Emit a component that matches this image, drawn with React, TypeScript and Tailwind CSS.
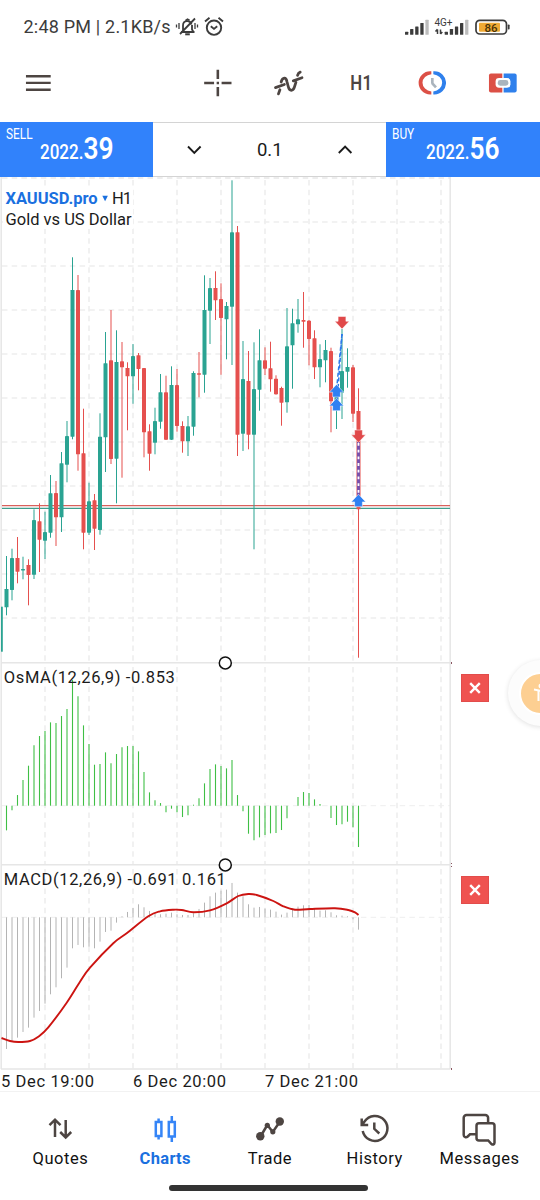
import type { ReactNode } from "react";

const UP = "#2aa392";
const DOWN = "#e5504e";
const INK = "#4d4542";

// [direction, high, body top, body bottom, low]
type Candle = [1 | -1, number, number, number, number];

const candles: Candle[] = [
  [1, 556, 589, 607.3, 615.3],
  [1, 548.7, 558, 590, 600.3],
  [-1, 537, 558, 571.7, 583.3],
  [1, 556.7, 569, 570.5, 579.3],
  [-1, 559.3, 565, 575, 605.3],
  [1, 509.3, 520, 574.7, 579],
  [-1, 503.3, 521.3, 539.7, 572],
  [1, 511.7, 532, 540.7, 559],
  [1, 475, 493.3, 532.7, 537.7],
  [-1, 481, 493, 517.3, 546],
  [1, 452, 463.3, 517.3, 532],
  [1, 421, 436, 464.7, 482.3],
  [1, 257.3, 290, 436.7, 439.3],
  [-1, 275, 290, 454.3, 470.7],
  [-1, 408.7, 453.3, 532.7, 549.3],
  [1, 482.7, 501.3, 532.7, 535],
  [-1, 494, 500.3, 528.7, 550],
  [1, 413.3, 436.7, 530, 534.7],
  [1, 332, 363.3, 437.3, 472],
  [-1, 310, 360.3, 459, 464],
  [1, 330.3, 362, 458.7, 503.3],
  [-1, 342, 361.3, 367.3, 477.7],
  [-1, 362.3, 368, 376.3, 430.3],
  [1, 344, 356, 376.3, 403.7],
  [-1, 353, 355.3, 369, 390.3],
  [-1, 368, 368, 432.3, 457.3],
  [-1, 424.3, 431.3, 453.7, 470.7],
  [1, 407.7, 421, 442.7, 454.3],
  [1, 374, 392.3, 421.7, 428.7],
  [-1, 375.7, 392.3, 439.7, 440],
  [1, 366.3, 385, 439.7, 440],
  [-1, 369, 385, 426, 431.7],
  [-1, 421.3, 426, 441.3, 452.7],
  [1, 416, 426.3, 441.3, 456],
  [1, 371.3, 373, 426.7, 435.7],
  [-1, 352, 373.3, 374.7, 397.3],
  [1, 275.3, 310, 374.7, 392.7],
  [1, 278, 288, 310.7, 344],
  [-1, 271.3, 288, 300.3, 320],
  [-1, 283.3, 299, 318, 374.7],
  [1, 302, 306, 319.3, 359.3],
  [1, 180.3, 232.3, 306.7, 365],
  [-1, 226, 232.3, 434.7, 456],
  [1, 341, 379, 433.7, 451],
  [-1, 351, 381, 434.7, 449.3],
  [1, 342.3, 389, 434.7, 549.3],
  [1, 329.3, 360.3, 389.7, 410.7],
  [-1, 347.3, 360.3, 368.7, 375],
  [-1, 341.7, 368.3, 379.3, 391.7],
  [-1, 375.3, 378.7, 394.3, 394.7],
  [-1, 386.7, 388, 402.7, 425.7],
  [1, 308, 346.3, 402.3, 412.7],
  [1, 308.7, 323.3, 345.3, 388.7],
  [1, 299, 319.3, 324.3, 332.7],
  [-1, 292, 320, 321.7, 347.7],
  [-1, 320, 320.7, 339, 365.3],
  [-1, 330.3, 338.3, 367.3, 379],
  [1, 344.3, 359, 367.3, 387.3],
  [1, 340, 350, 360.3, 382.3],
  [-1, 347.7, 351, 401.3, 432.3],
  [1, 388, 392, 402, 429],
  [1, 329, 371, 392.7, 419],
  [1, 348.3, 367, 371.7, 387.7],
  [-1, 365, 367.3, 413.7, 422],
  [-1, 388.3, 411, 509.3, 657.7],
];

// histogram values, in thirds of a pixel from the zero line
const osma = [
  -74, -14, 32, 77, 120, 181, 209, 224, 250, 248, 269, 290, 377, 328, 241, 185, 123, 125, 160, 127, 155, 175,
  179, 179, 163, 101, 40, 16, 8, -20, -9, -20, -34, -29, 3, 22, 67, 110, 124, 119, 112, 137, 32, -17, -84, -104,
  -95, -88, -83, -82, -73, -38, 0, 26, 41, 38, 19, 5, 0, -37, -58, -56, -48, -65, -124,
];

const macd = [
  -395, -373, -361, -344, -331, -301, -281, -259, -231, -210, -183, -151, -93, -83, -90, -88, -93, -73, -44,
  -40, -16, 3, 16, 28, 39, 30, 19, 12, 9, 11, 14, 9, 7, 7, 12, 25, 44, 63, 74, 80, 83, 103, 74, 63, 39, 29, 31,
  26, 23, 17, 8, 14, 26, 32, 36, 37, 28, 20, 21, 15, 6, 5, 3, -6, -37,
];

const signal: [number, number][] = [
  [1.5, 1038], [10, 1041], [18.3, 1042], [30, 1041], [38.3, 1036.7], [48.3, 1027.3], [66.7, 1002.7],
  [80, 981.7], [90, 967.7], [113.3, 943.3], [126.7, 933.3], [148.3, 916.3], [160, 911.3], [173.3, 909.7],
  [181.7, 910], [193.3, 912.3], [210, 910.3], [226.7, 903.3], [238.3, 896], [248.3, 894], [256.7, 895],
  [273.3, 901], [283.3, 906.3], [295, 909.7], [310, 909], [335, 908.3], [348.3, 910], [355, 912.3], [358.5, 915],
];

const gridX = [45, 89, 133, 177, 221, 265, 309, 353, 397, 441];
const gridY = [222, 266, 310, 354, 398, 442, 486, 530, 574, 618];

const barX = (i: number) => 6.5 + 5.5 * i;

function smooth(points: [number, number][]) {
  let d = `M${points[0][0]} ${points[0][1]}`;
  for (let i = 0; i < points.length - 1; i++) {
    const p0 = points[Math.max(i - 1, 0)];
    const p1 = points[i];
    const p2 = points[i + 1];
    const p3 = points[Math.min(i + 2, points.length - 1)];
    d += `C${p1[0] + (p2[0] - p0[0]) / 6} ${p1[1] + (p2[1] - p0[1]) / 6} ${p2[0] - (p3[0] - p1[0]) / 6} ${
      p2[1] - (p3[1] - p1[1]) / 6
    } ${p2[0]} ${p2[1]}`;
  }
  return d;
}

export default function App() {
  return (
    <div className="relative flex h-[1200px] w-[540px] flex-col overflow-hidden bg-white font-[Roboto,sans-serif] text-[#1b1b1b]">
      <StatusBar />
      <Toolbar />
      <TradeBar />
      <main className="flex h-[914px] shrink-0">
        <Chart />
        <aside className="flex flex-col pl-[9px] pt-[497px]">
          <CloseButton />
          <div className="h-[174.5px]" />
          <CloseButton />
        </aside>
      </main>
      <BottomNav />
      <FloatingBubble />
    </div>
  );
}

function StatusBar() {
  return (
    <header className="flex h-[53px] shrink-0 items-center pl-[23.5px] pr-[30px] text-[#3c3c3c]">
      <span className="whitespace-nowrap text-[18px] tracking-[0.2px]">2:48 PM | 2.1KB/s</span>
      <svg className="ml-1 shrink-0" width="24" height="22" viewBox="0 0 24 22" fill="none" stroke="#3c3c3c" strokeWidth="1.8">
        <path d="M6 16h13.5M8 14.5V9.5a4.3 4.3 0 0 1 8.5-1M17 9v4.5l1.500 2.500M20 2.500 5 18" />
        <path d="M10.500 4.800 12.500 3.300l2 1" />
        <path d="M10.200 18.300h4.600" strokeWidth="2" />
        <path d="M1.500 8.500v3M4 7v6M22.500 8.500v3M20 7v6" strokeWidth="1.300" />
      </svg>
      <svg className="ml-[5px] shrink-0" width="20" height="22" viewBox="0 0 20 22" fill="none" stroke="#3c3c3c" strokeWidth="1.900">
        <circle cx="10" cy="11.700" r="7.200" />
        <path d="M1 5.500 5.500 1.800M19 5.500l-4.500-3.700" />
        <path d="m6.800 10.300 3.200 2.600 3.200-2.600" />
      </svg>
      <svg className="ml-auto shrink-0" width="106" height="22" viewBox="404 15 106 22">
        <Signal x={405} />
        <text x="434.500" y="25" fontSize="10" textLength="18" fill="#3c3c3c">
          4G+
        </text>
        <path d="M437.500 33v-4.500M435.500 30.500l2-2.200M440.500 28.500v4.500M442.300 31l-1.800 2" stroke="#3c3c3c" strokeWidth="1.500" />
        <Signal x={444.7} />
        <rect x="476" y="19.300" width="30.500" height="13.700" rx="3.800" fill="#fff" stroke="#3c3c3c" strokeWidth="1.700" />
        <rect x="479" y="21.800" width="21" height="9" rx="1" fill="#efaa35" />
        <rect x="507.800" y="23.500" width="1.800" height="5" rx="0.800" fill="#3c3c3c" />
        <text x="484.500" y="30.500" fontSize="11.500" fontWeight="500" textLength="13" fill="#4a3207">
          86
        </text>
      </svg>
    </header>
  );
}

function Signal({ x }: { x: number }) {
  return (
    <g>
      {[3, 5.7, 8.3, 11.7, 15].map((h, i) => (
        <rect key={h} x={x + i * 5.1} y={33.8 - h} width="3.300" height={h} rx="0.500" fill={i === 4 ? "#bdbdbd" : "#3c3c3c"} />
      ))}
    </g>
  );
}

function Toolbar() {
  return (
    <div className="flex h-[69px] shrink-0 items-center px-[22px] pb-[9px]">
      <svg width="32" height="32" viewBox="22 67.500 32 32" stroke={INK} strokeWidth="2.400">
        <path d="M26 76.700h25M26 83.400h25M26 90.300h25" />
      </svg>
      <svg className="ml-[148px]" width="32" height="32" viewBox="202 67.500 32 32" fill="none" stroke={INK} strokeWidth="2.600">
        <path d="M204.200 83.500h10M221.800 83.500h10M218 70v9.500M218 87.500V97M216.800 83.500h2.400" />
      </svg>
      <svg className="ml-[40px]" width="32" height="32" viewBox="273 67.500 32 32" fill="none" stroke={INK} strokeWidth="2.800" strokeLinecap="round">
        <path d="M275.500 88.200 284.500 85M293.500 81.300l8.800-3.100" />
        <path d="M278.500 94.500 280 90.300M281.200 82.500c1.500-4.800 5-5.500 6 0l1.200 4.500c1.200 5.300 5 4.800 6.300.5l1.500-4.800M297.800 75.800c.5-1.800 1.200-2.800 2.700-3.300" />
      </svg>
      <div className="ml-[40px] flex w-[32px] justify-center">
        <span className="inline-block scale-x-[0.84] text-[20px] font-semibold leading-8 tracking-[0.5px] text-[#4d4542]">
          H1
        </span>
      </div>
      <svg className="ml-[38px]" width="32" height="32" viewBox="415 67.500 32 32" fill="none">
        <path d="M431.500 71.700h-1.200a11.650 11.650 0 0 0 0 23.300h1.200v-3a10 8.700 0 0 1 0-17.300z" fill="#dc5046" />
        <path d="M433.500 71.700h1.200a11.650 11.650 0 0 1 0 23.300h-1.200v-3a10 8.700 0 0 0 0-17.300z" fill="#2f80ec" />
        <path d="M432.500 78.500v4.500q0 1 .7 1.700l3 3.300" stroke="#aab4bd" strokeWidth="2.700" />
      </svg>
      <svg className="ml-[40px]" width="32" height="32" viewBox="487 67.500 32 32">
        <path d="M503.500 74h-11.500a2 2 0 0 0-2 2v15a2 2 0 0 0 2 2h11.500z" fill="#dc5046" />
        <path d="M504.800 74H516a2 2 0 0 1 2 2v15a2 2 0 0 1-2 2h-11.200z" fill="#2f80ec" />
        <rect x="496.700" y="78.500" width="15" height="9.800" rx="3.500" fill="#fff" />
        <rect x="498.900" y="80.500" width="10.700" height="5.800" rx="2.500" fill="#aab4bd" />
      </svg>
    </div>
  );
}

function TradeBar() {
  return (
    <div className="flex h-[55px] shrink-0">
      <PriceButton side="SELL" whole="2022." pips="39" className="w-[153.300px] pl-[39.500px]" />
      <div className="flex flex-1 items-center border-y border-[#d4d4d4] pl-[32px] pr-[32px]">
        <svg width="18" height="18" viewBox="0 0 18 18" fill="none" stroke="#1b1b1b" strokeWidth="1.900">
          <path d="m3 5.500 6.300 6.300 6.300-6.300" />
        </svg>
        <span className="flex-1 pt-px text-center text-[18.500px] leading-none">0.1</span>
        <svg width="18" height="18" viewBox="0 0 18 18" fill="none" stroke="#1b1b1b" strokeWidth="1.900">
          <path d="m2.800 12 6.300-6.300 6.300 6.300" />
        </svg>
      </div>
      <PriceButton side="BUY" whole="2022." pips="56" className="w-[153.700px] pl-[39.500px]" />
    </div>
  );
}

function PriceButton({ side, whole, pips, className }: { side: string; whole: string; pips: string; className: string }) {
  return (
    <button className={`relative flex items-start bg-[#3182fb] text-left text-white ${className}`}>
      <span className="absolute left-[5.500px] top-[5px] origin-left scale-x-[0.82] text-[14.500px] leading-4">{side}</span>
      <span className="origin-left scale-x-[0.85] whitespace-nowrap pt-[9px] text-[20px] font-medium leading-9">
        {whole}
        <span className="text-[31px] font-semibold">{pips}</span>
      </span>
    </button>
  );
}

function Chart() {
  return (
    <svg className="shrink-0" width="452" height="914" viewBox="0 177 452 914">
      <g stroke="#eeeeee" strokeWidth="1.600" strokeDasharray="5.500 4.200" fill="none">
        {gridX.map((x) => (
          <path key={x} d={`M${x} 180V662M${x} 667V864M${x} 869V1069`} />
        ))}
        {gridY.map((y) => (
          <path key={y} d={`M2 ${y}H450`} />
        ))}
        <path d="M2 805.700H450M2 917.300H450" strokeWidth="1" />
      </g>
      <path d="M2 178H450" stroke="#dcdcdc" strokeDasharray="5.500 4.200" />
      <g stroke="#e6e6e6" strokeWidth="1.500">
        <path d="M1.200 177V1069M450.200 177V1069M1 662.700H450M1 864.700H450M1 1069H450" />
      </g>
      <path d="M451.500 662v2M451.500 863v1M451.500 866v1M451.500 1068v2" stroke="#8a5560" strokeWidth="1" />
      <rect x="3" y="188" width="130" height="41" fill="#fff" />

      <path d="M2 505.600H450" stroke="#d9605c" strokeWidth="1.200" />
      <path d="M2 508.400H450" stroke="#3f9d8c" strokeWidth="1.200" />

      <rect x="1" y="606.700" width="1.800" height="45" fill={UP} />
      {candles.map(([dir, high, top, bottom, low], i) => (
        <g key={i} fill={dir > 0 ? UP : DOWN}>
          <rect x={barX(i) - 0.5} y={high} width="1" height={low - high} />
          <rect x={barX(i) - 2} y={top} width="4" height={bottom - top} rx="0.400" />
        </g>
      ))}

      <g stroke="#2b79ea" strokeWidth="1.500" strokeDasharray="4 2.500" fill="none">
        <path d="M342 334 336.500 390" />
        <path d="M342 334 337 403" strokeDashoffset="2" />
      </g>
      <path d="M358.500 442V495" stroke="#7352b0" strokeWidth="2.800" />
      <path d="M358.500 443V495" stroke="#fff" strokeWidth="1.800" strokeDasharray="2.800 3.900" />
      <OrderArrow x={342} y={328.5} kind="sell" />
      <OrderArrow x={336.5} y={385} kind="buy" />
      <OrderArrow x={336.5} y={398.7} kind="buy" />
      <OrderArrow x={358.5} y={442} kind="sell" />
      <OrderArrow x={358.5} y={494.7} kind="buy" />

      <g stroke="#3fbf45" strokeWidth="1.100">
        {osma.map((v, i) => (
          <line key={i} x1={barX(i)} x2={barX(i)} y1="805.700" y2={805.7 - v / 3} />
        ))}
      </g>
      <g stroke="#b4b4b4">
        {macd.map((v, i) => (
          <line key={i} x1={barX(i)} x2={barX(i)} y1="917.300" y2={917.3 - v / 3} />
        ))}
      </g>
      <path d={smooth(signal)} stroke="#cc1411" strokeWidth="1.900" fill="none" />

      <g fill="#fff" stroke="#111" strokeWidth="1.500">
        <circle cx="225.300" cy="662.900" r="6" />
        <circle cx="225.300" cy="864.900" r="6" />
      </g>

      <g fontSize="16.500" fill="#1b1b1b">
        <text x="5.500" y="203.800" fontWeight="700" fill="#1a70df" textLength="92">
          XAUUSD.pro
        </text>
        <path d="M102.300 195.800h5.600l-2.800 5.400z" fill="#1a70df" />
        <text x="112" y="203.800" textLength="20">
          H1
        </text>
        <text x="5.500" y="224.600" textLength="126">
          Gold vs US Dollar
        </text>
        <text x="3.800" y="683" textLength="171">
          OsMA(12,26,9) -0.853
        </text>
        <text x="3.800" y="885" textLength="222">
          MACD(12,26,9) -0.691 0.161
        </text>
        <text x="1" y="1086.700" textLength="93">
          5 Dec 19:00
        </text>
        <text x="133" y="1086.700" textLength="93">
          6 Dec 20:00
        </text>
        <text x="265" y="1086.700" textLength="93">
          7 Dec 21:00
        </text>
      </g>
    </svg>
  );
}

// y is the tip of the arrow
function OrderArrow({ x, y, kind }: { x: number; y: number; kind: "buy" | "sell" }) {
  return (
    <path
      transform={`translate(${x} ${y}) scale(1 ${kind === "buy" ? 1 : -1})`}
      d="M0-.5 7.200 7.200H3.900v4.800h-7.800V7.200h-3.300z"
      fill={kind === "buy" ? "#2f80f2" : "#e0494a"}
      stroke="#fff"
      strokeWidth="0.500"
    />
  );
}

function CloseButton() {
  return (
    <button className="flex h-[27.500px] w-[27.500px] items-center justify-center border border-[#e24c4b] bg-[#ef5350]">
      <svg width="12" height="12" viewBox="0 0 12 12" stroke="#fff" strokeWidth="2.400">
        <path d="m1.200 1.200 9.600 9.600M10.800 1.200l-9.600 9.600" />
      </svg>
    </button>
  );
}

function BottomNav() {
  return (
    <footer className="flex flex-1 flex-col border-t border-[#f2f2f2]">
      <nav className="grid grid-cols-5 px-2 pt-[17px]">
        <NavItem label="Quotes">
          <path d="M14 28V11M8.500 16.200l5.500-5.500 5.500 5.500M24.700 11v17M19.200 23l5.500 5.500 5.500-5.500" />
        </NavItem>
        <NavItem label="Charts" active>
          <path d="M9.800 13h5.600v14H9.800zM12.600 9.500V13M12.600 27v3.500M22.800 13h6v14.500h-6zM25.800 7v6M25.800 27.500V33" />
        </NavItem>
        <NavItem label="Trade">
          <path d="M9.500 27.500 16.300 16l5.500 7L29 12.500" />
          <g fill={INK} stroke="none">
            <circle cx="9.300" cy="27.300" r="4.200" />
            <circle cx="16.300" cy="16.300" r="2.600" />
            <circle cx="21.800" cy="22.800" r="2.600" />
            <circle cx="28.800" cy="12.500" r="4.200" />
          </g>
        </NavItem>
        <NavItem label="History">
          <path d="M6.700 22a12.500 12.500 0 1 0 1.800-9.500L6 16M5.700 9.500V16h6.500M18.300 13.500v6.300l5 4.700" />
        </NavItem>
        <NavItem label="Messages">
          <path d="M15.500 25.300H9l-2.300 2.200c-1.500 1.300-4 .8-4-1.500V8.800A2.800 2.800 0 0 1 5.500 6h18.800a2.800 2.800 0 0 1 2.800 2.800v4.500M18 14.200h13a2.500 2.500 0 0 1 2.500 2.500v17.100c0 1.800-1.700 2.300-3 1.200l-3.300-3.500H18a2.500 2.500 0 0 1-2.500-2.500V16.700a2.500 2.500 0 0 1 2.500-2.500z" />
        </NavItem>
      </nav>
      <div className="ml-[168.500px] mt-[16px] h-[5.500px] w-[199.500px] rounded-full bg-[#333333]" />
    </footer>
  );
}

function NavItem({ label, active = false, children }: { label: string; active?: boolean; children: ReactNode }) {
  return (
    <a className="flex flex-col items-center">
      <svg width="38" height="38" viewBox="0 0 38 38" fill="none" stroke={active ? "#3585f7" : INK} strokeWidth="2.500">
        {children}
      </svg>
      <span
        className={
          active
            ? "mt-[2px] text-[16.500px] font-bold leading-5 tracking-[0.3px] text-[#1a70df]"
            : "mt-[2px] text-[16.500px] leading-5 tracking-[0.55px] text-[#111111]"
        }
      >
        {label}
      </span>
    </a>
  );
}

function FloatingBubble() {
  return (
    <div className="absolute left-[507.500px] top-[660px] flex h-[66px] w-[66px] items-center justify-center rounded-full bg-[#fcfcfc] shadow-[0_1px_5px_rgba(0,0,0,0.12)]">
      <div className="flex h-[43px] w-[43px] items-center justify-center rounded-full border-2 border-white bg-[#fdcf92]">
        <svg width="22" height="22" viewBox="0 0 22 22" fill="none" stroke="#fff" strokeWidth="2">
          <path d="M4 7.500 11 9l7-1.500M8.500 9v10M13.500 9v10" />
          <circle cx="11" cy="4" r="1.500" fill="#fff" />
        </svg>
      </div>
    </div>
  );
}
